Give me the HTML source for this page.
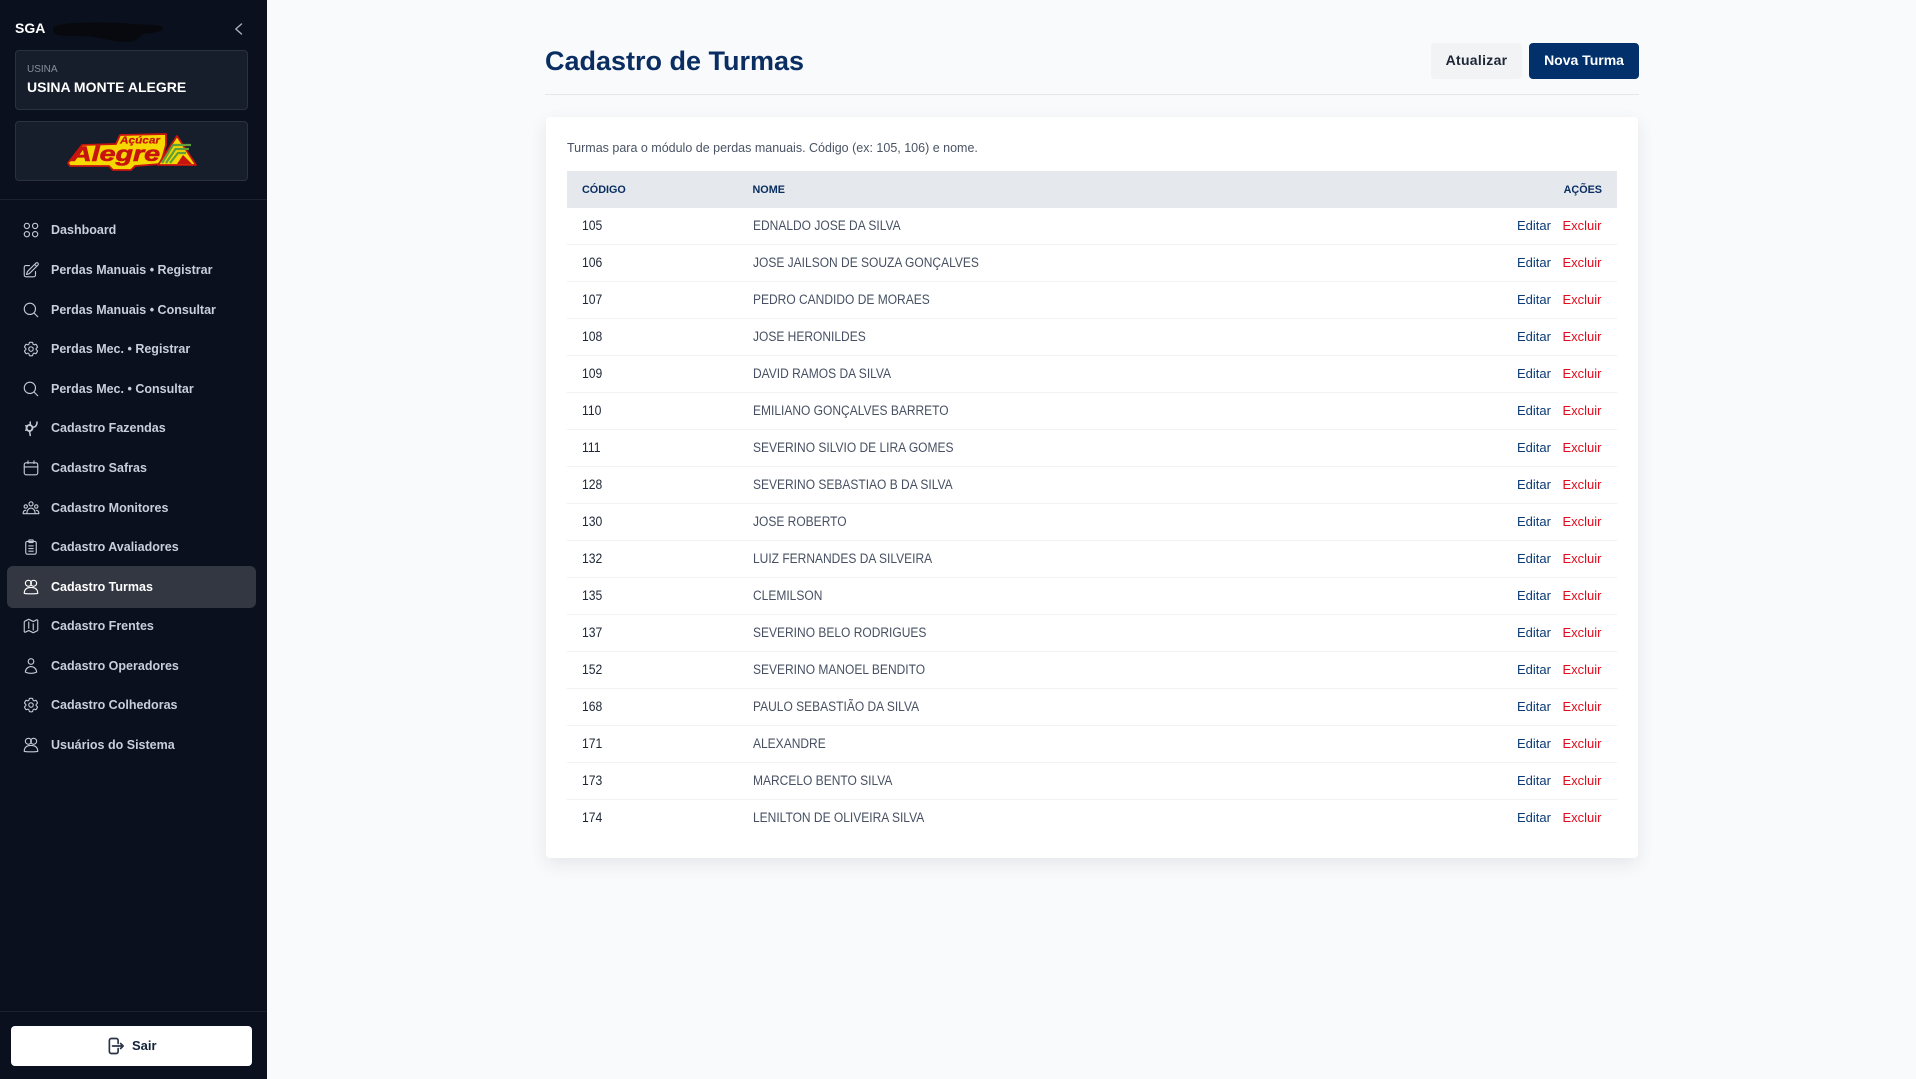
<!DOCTYPE html>
<html lang="pt-BR">
<head>
<meta charset="utf-8">
<title>Cadastro de Turmas</title>
<style>
*{box-sizing:border-box;margin:0;padding:0}
html,body{width:1916px;height:1079px;overflow:hidden;background:#f9fafc;font-family:"Liberation Sans",Arial,sans-serif}
.abs{position:absolute}
#side{position:absolute;left:0;top:0;width:267px;height:1079px;background:#0a101d}
.box{position:absolute;left:15px;width:233px;height:60px;background:#161d2b;border:1px solid #2a3140;border-radius:4px}
.nav{position:absolute;left:0;width:267px;height:40px;line-height:40px;color:#c8cfda;font-size:13px;font-weight:700}
.nav span{position:absolute;left:51px;top:0;white-space:nowrap;transform:scaleX(.962);transform-origin:0 50%}
.nav svg{position:absolute;left:22px;top:11px;width:18px;height:18px;fill:none;stroke:#c3cad4;stroke-width:1.5;stroke-linecap:round;stroke-linejoin:round}
.nav.on{color:#fff}
.nav.on svg{stroke:#fff}
#active{position:absolute;left:7px;top:566px;width:249px;height:42px;background:#333742;border-radius:6px}
#card{position:absolute;left:546px;top:117px;width:1092px;height:741px;background:#fff;border-radius:4px;box-shadow:0 6px 18px rgba(20,30,50,.09)}
.row{position:absolute;left:567px;width:1050px;height:37px;line-height:36px;border-bottom:1px solid #f0f2f5;font-size:13px}
.row b,.row i,.row u,.row s{position:absolute;font-style:normal;font-weight:400;text-decoration:none;white-space:nowrap;top:0}
.row b{left:15px;color:#1d2635;font-size:13.5px;transform:scaleX(.9);transform-origin:0 50%}
.row i{left:185.500px;color:#465062;font-size:13.5px;transform:scaleX(.889);transform-origin:0 50%}
.row u{left:950px;color:#0b3a75}
.row s{left:995.500px;color:#e30a1c}
.th{position:absolute;top:172px;line-height:37px;font-size:10.800px;font-weight:700;color:#0a2e62;white-space:nowrap}
</style>
</head>
<body>
<div id="side">
  <div class="abs" style="left:15px;top:19px;font-size:14px;line-height:18px;font-weight:700;color:#fff">SGA</div>
  <svg class="abs" style="left:52px;top:20px" width="116" height="26" viewBox="0 0 116 26"><path d="M2 6C20 1 60 2 80 4c14 1 30 0 31 4 0 4-10 5-20 6-4 4-8 8-16 8-10 0-22-3-34-5-12-2-34 0-38-3C1 12 0 8 2 6z" fill="#07090f"/></svg>
  <svg class="abs" style="left:232px;top:22px" width="14" height="14" viewBox="0 0 14 14" fill="none" stroke="#aab1bd" stroke-width="1.4" stroke-linecap="round" stroke-linejoin="round"><path d="M9.5 2 3.8 7l5.7 5"/></svg>

  <div class="box" style="top:50px"></div>
  <div class="abs" style="left:27px;top:63px;font-size:10px;line-height:13px;color:#878f9d">USINA</div>
  <div class="abs" style="left:27px;top:78px;font-size:14px;line-height:18px;font-weight:700;color:#fff;white-space:nowrap">USINA MONTE ALEGRE</div>

  <div class="box" style="top:121px"></div>
  <svg class="abs" style="left:60px;top:128px" width="145" height="46" viewBox="60 128 145 46">
    <path d="M68 163 82 145 116 144 120 135 166 134 166 145 163 156 160 164 148 165 135 166 131 170 113 170 109 166 70 166Z" fill="#f5d800" stroke="#c8140f" stroke-width="1.800" stroke-linejoin="round"/>
    <path d="M177 136 196 165 158 165Z" fill="#f5d800" stroke="#c8140f" stroke-width="1.800" stroke-linejoin="round"/>
    <path d="M162 163 173 145H191M166 163 175.500 149H189M170 163 178 153H186" stroke="#5f9e3a" stroke-width="2.200" fill="none"/>
    <path d="M177 164 183 155 192 164Z" fill="#c8140f"/>
    <text x="120" y="143.700" font-family="'Liberation Sans',sans-serif" font-size="10.500" font-weight="700" font-style="italic" fill="#c8140f" stroke="#c8140f" stroke-width=".25" textLength="40" lengthAdjust="spacingAndGlyphs">Açúcar</text>
    <text x="71" y="161" font-family="'Liberation Sans',sans-serif" font-size="21" font-weight="700" font-style="italic" fill="#c8140f" stroke="#c8140f" stroke-width=".6" textLength="89" lengthAdjust="spacingAndGlyphs">Alegre</text>
  </svg>

  <div class="abs" style="left:0;top:199px;width:267px;height:1px;background:#1b2231"></div>

  <div id="active"></div>

  <div class="nav" style="top:210px"><svg viewBox="0 0 24 24"><circle cx="6.500" cy="6.500" r="3.500"/><circle cx="17.500" cy="6.500" r="3.500"/><circle cx="6.500" cy="17.500" r="3.500"/><circle cx="17.500" cy="17.500" r="3.500"/></svg><span>Dashboard</span></div>
  <div class="nav" style="top:250px"><svg viewBox="0 0 24 24"><path d="M16.862 4.487l1.687-1.688a1.875 1.875 0 112.652 2.652L10.582 16.07a4.5 4.5 0 01-1.897 1.13L6 18l.8-2.685a4.5 4.5 0 011.13-1.897l8.932-8.931zm0 0L19.5 7.125M18 14v4.75A2.25 2.25 0 0115.750 21H5.250A2.25 2.25 0 013 18.750V8.250A2.25 2.25 0 015.250 6H10"/></svg><span>Perdas Manuais • Registrar</span></div>
  <div class="nav" style="top:290px"><svg viewBox="0 0 24 24"><path d="M21 21l-5.197-5.197m0 0A7.5 7.5 0 105.196 5.196a7.5 7.5 0 0010.607 10.607z"/></svg><span>Perdas Manuais • Consultar</span></div>
  <div class="nav" style="top:329px"><svg viewBox="0 0 24 24"><path d="M9.594 3.940c.09-.542.56-.94 1.110-.94h2.593c.55 0 1.020.398 1.110.94l.213 1.281c.063.374.313.686.645.87.074.04.147.083.22.127.324.196.72.257 1.075.124l1.217-.456a1.125 1.125 0 011.370.49l1.296 2.247a1.125 1.125 0 01-.26 1.431l-1.003.827c-.293.24-.438.613-.431.992a6.759 6.759 0 010 .255c-.007.378.138.75.43.99l1.005.828c.424.35.534.954.26 1.43l-1.298 2.247a1.125 1.125 0 01-1.369.491l-1.217-.456c-.355-.133-.75-.072-1.076.124a6.570 6.570 0 01-.22.128c-.331.183-.581.495-.644.869l-.213 1.280c-.09.543-.56.941-1.110.941h-2.594c-.55 0-1.020-.398-1.110-.94l-.213-1.281c-.062-.374-.312-.686-.644-.87a6.520 6.520 0 01-.22-.127c-.325-.196-.72-.257-1.076-.124l-1.217.456a1.125 1.125 0 01-1.369-.49l-1.297-2.247a1.125 1.125 0 01.26-1.431l1.004-.827c.292-.24.437-.613.43-.992a6.932 6.932 0 010-.255c.007-.378-.138-.75-.43-.99l-1.004-.828a1.125 1.125 0 01-.26-1.430l1.297-2.247a1.125 1.125 0 011.370-.491l1.216.456c.356.133.751.072 1.076-.124.072-.044.146-.087.22-.128.332-.183.582-.495.644-.869l.214-1.281z"/><circle cx="12" cy="12" r="3"/></svg><span>Perdas Mec. • Registrar</span></div>
  <div class="nav" style="top:369px"><svg viewBox="0 0 24 24"><path d="M21 21l-5.197-5.197m0 0A7.5 7.5 0 105.196 5.196a7.5 7.5 0 0010.607 10.607z"/></svg><span>Perdas Mec. • Consultar</span></div>
  <div class="nav" style="top:408px"><svg viewBox="0 0 24 24"><circle cx="10" cy="12" r="4" stroke-width="2.5"/><path d="M11 4v4M14 11c4 0 6-2 6-7M10 16l1 6M5 9l2 1M5 15l2-1" stroke-width="2"/></svg><span>Cadastro Fazendas</span></div>
  <div class="nav" style="top:448px"><svg viewBox="0 0 24 24"><rect x="3" y="5" width="18" height="16" rx="2.500"/><path d="M8 2.500V6M16 2.500V6M3 10.500h18"/></svg><span>Cadastro Safras</span></div>
  <div class="nav" style="top:488px"><svg viewBox="0 0 24 24"><circle cx="12" cy="6.500" r="2.700"/><circle cx="5" cy="10" r="2.200"/><circle cx="19" cy="10" r="2.200"/><path d="M6.500 19c0-4 2.500-7 5.500-7s5.500 3 5.500 7M1.500 19.500c0-2.500 1-4.500 3.500-4.500M22.500 19.500c0-2.500-1-4.500-3.500-4.500M1.500 19.500h21"/></svg><span>Cadastro Monitores</span></div>
  <div class="nav" style="top:527px"><svg viewBox="0 0 24 24"><rect x="5" y="4.500" width="14" height="17" rx="2"/><rect x="9" y="2.500" width="6" height="3.500" rx="1"/><path d="M9 10.500h6M9 14h6M9 17.500h6"/></svg><span>Cadastro Avaliadores</span></div>
  <div class="nav on" style="top:567px"><svg viewBox="0 0 24 24"><circle cx="8.500" cy="7" r="4"/><circle cx="15.500" cy="7" r="4"/><path d="M3 20.500c0-5 3-8 9-8s9 3 9 8c-2 .8-16 .8-18 0z"/></svg><span>Cadastro Turmas</span></div>
  <div class="nav" style="top:606px"><svg viewBox="0 0 24 24"><path d="M9 6.750V15m6-6v8.250m.503 3.498l4.875-2.437c.381-.19.622-.58.622-1.006V4.820c0-.836-.88-1.380-1.628-1.006l-3.869 1.934c-.317.159-.69.159-1.006 0L9.503 3.252a1.125 1.125 0 00-1.006 0L3.622 5.689C3.240 5.880 3 6.270 3 6.695V19.180c0 .836.88 1.380 1.628 1.006l3.869-1.934c.317-.159.69-.159 1.006 0l4.994 2.497c.317.158.69.158 1.006 0z"/></svg><span>Cadastro Frentes</span></div>
  <div class="nav" style="top:646px"><svg viewBox="0 0 24 24"><path d="M15.750 6a3.750 3.750 0 11-7.500 0 3.750 3.750 0 017.500 0zM4.501 20.118a7.500 7.500 0 0114.998 0A17.933 17.933 0 0112 21.750c-2.676 0-5.216-.584-7.499-1.632z"/></svg><span>Cadastro Operadores</span></div>
  <div class="nav" style="top:685px"><svg viewBox="0 0 24 24"><path d="M9.594 3.940c.09-.542.56-.94 1.110-.94h2.593c.55 0 1.020.398 1.110.94l.213 1.281c.063.374.313.686.645.87.074.04.147.083.22.127.324.196.72.257 1.075.124l1.217-.456a1.125 1.125 0 011.370.49l1.296 2.247a1.125 1.125 0 01-.26 1.431l-1.003.827c-.293.24-.438.613-.431.992a6.759 6.759 0 010 .255c-.007.378.138.75.43.99l1.005.828c.424.35.534.954.26 1.43l-1.298 2.247a1.125 1.125 0 01-1.369.491l-1.217-.456c-.355-.133-.75-.072-1.076.124a6.570 6.570 0 01-.22.128c-.331.183-.581.495-.644.869l-.213 1.280c-.09.543-.56.941-1.110.941h-2.594c-.55 0-1.020-.398-1.110-.94l-.213-1.281c-.062-.374-.312-.686-.644-.87a6.520 6.520 0 01-.22-.127c-.325-.196-.72-.257-1.076-.124l-1.217.456a1.125 1.125 0 01-1.369-.49l-1.297-2.247a1.125 1.125 0 01.26-1.431l1.004-.827c.292-.24.437-.613.43-.992a6.932 6.932 0 010-.255c.007-.378-.138-.75-.43-.99l-1.004-.828a1.125 1.125 0 01-.26-1.430l1.297-2.247a1.125 1.125 0 011.370-.491l1.216.456c.356.133.751.072 1.076-.124.072-.044.146-.087.22-.128.332-.183.582-.495.644-.869l.214-1.281z"/><circle cx="12" cy="12" r="3"/></svg><span>Cadastro Colhedoras</span></div>
  <div class="nav" style="top:725px"><svg viewBox="0 0 24 24"><circle cx="8.500" cy="7" r="4"/><circle cx="15.500" cy="7" r="4"/><path d="M3 20.500c0-5 3-8 9-8s9 3 9 8c-2 .8-16 .8-18 0z"/></svg><span>Usuários do Sistema</span></div>

  <div class="abs" style="left:0;top:1011px;width:267px;height:1px;background:#1b2231"></div>
  <div class="abs" style="left:11px;top:1026px;width:241px;height:40px;background:#fff;border-radius:4px"></div>
  <svg class="abs" style="left:105px;top:1036px" width="20" height="20" viewBox="0 0 24 24" fill="none" stroke="#2a3445" stroke-width="2" stroke-linecap="round" stroke-linejoin="round"><path d="M15.750 9V5.250A2.250 2.250 0 0013.500 3h-6a2.250 2.250 0 00-2.250 2.250v13.500A2.250 2.250 0 007.500 21h6a2.250 2.250 0 002.250-2.250V15m3 0l3-3m0 0l-3-3m3 3H9"/></svg>
  <div class="abs" style="left:132px;top:1037px;font-size:13px;line-height:18px;font-weight:700;color:#14213a">Sair</div>
</div>

<div class="abs" style="left:545px;top:38px;font-size:27px;line-height:46px;font-weight:700;color:#0a2e62;white-space:nowrap">Cadastro de Turmas</div>
<div class="abs" style="left:1431px;top:43px;width:91px;height:36px;background:#f2f3f5;border-radius:4px;text-align:center;line-height:35px;font-size:14px;font-weight:700;letter-spacing:.3px;color:#1d2635">Atualizar</div>
<div class="abs" style="left:1529px;top:43px;width:110px;height:36px;background:#02306b;border-radius:4px;text-align:center;line-height:35px;font-size:14px;font-weight:700;color:#fff">Nova Turma</div>
<div class="abs" style="left:545px;top:94px;width:1094px;height:1px;background:#e5e7eb"></div>

<div id="card"></div>
<div class="abs" style="left:567px;top:140px;font-size:12.500px;line-height:16px;color:#4a5464;white-space:nowrap">Turmas para o módulo de perdas manuais. Código (ex: 105, 106) e nome.</div>
<div class="abs" style="left:567px;top:171px;width:1050px;height:37px;background:#e5e9ed"></div>
<div class="th" style="left:582px">CÓDIGO</div>
<div class="th" style="left:752.500px">NOME</div>
<div class="th" style="right:314px">AÇÕES</div>

<div class="row" style="top:208px"><b>105</b><i>EDNALDO JOSE DA SILVA</i><u>Editar</u><s>Excluir</s></div>
<div class="row" style="top:245px"><b>106</b><i>JOSE JAILSON DE SOUZA GONÇALVES</i><u>Editar</u><s>Excluir</s></div>
<div class="row" style="top:282px"><b>107</b><i>PEDRO CANDIDO DE MORAES</i><u>Editar</u><s>Excluir</s></div>
<div class="row" style="top:319px"><b>108</b><i>JOSE HERONILDES</i><u>Editar</u><s>Excluir</s></div>
<div class="row" style="top:356px"><b>109</b><i>DAVID RAMOS DA SILVA</i><u>Editar</u><s>Excluir</s></div>
<div class="row" style="top:393px"><b>110</b><i>EMILIANO GONÇALVES BARRETO</i><u>Editar</u><s>Excluir</s></div>
<div class="row" style="top:430px"><b>111</b><i>SEVERINO SILVIO DE LIRA GOMES</i><u>Editar</u><s>Excluir</s></div>
<div class="row" style="top:467px"><b>128</b><i>SEVERINO SEBASTIAO B DA SILVA</i><u>Editar</u><s>Excluir</s></div>
<div class="row" style="top:504px"><b>130</b><i>JOSE ROBERTO</i><u>Editar</u><s>Excluir</s></div>
<div class="row" style="top:541px"><b>132</b><i>LUIZ FERNANDES DA SILVEIRA</i><u>Editar</u><s>Excluir</s></div>
<div class="row" style="top:578px"><b>135</b><i>CLEMILSON</i><u>Editar</u><s>Excluir</s></div>
<div class="row" style="top:615px"><b>137</b><i>SEVERINO BELO RODRIGUES</i><u>Editar</u><s>Excluir</s></div>
<div class="row" style="top:652px"><b>152</b><i>SEVERINO MANOEL BENDITO</i><u>Editar</u><s>Excluir</s></div>
<div class="row" style="top:689px"><b>168</b><i>PAULO SEBASTIÃO DA SILVA</i><u>Editar</u><s>Excluir</s></div>
<div class="row" style="top:726px"><b>171</b><i>ALEXANDRE</i><u>Editar</u><s>Excluir</s></div>
<div class="row" style="top:763px"><b>173</b><i>MARCELO BENTO SILVA</i><u>Editar</u><s>Excluir</s></div>
<div class="row" style="top:800px;border-bottom:0"><b>174</b><i>LENILTON DE OLIVEIRA SILVA</i><u>Editar</u><s>Excluir</s></div>
</body>
</html>
